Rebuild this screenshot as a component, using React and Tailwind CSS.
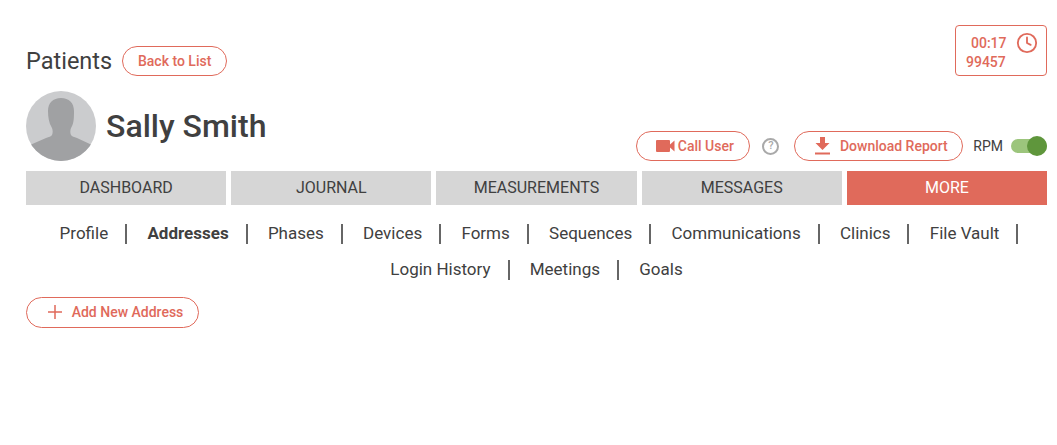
import React from "react";
import { Clock } from "lucide-react";

const tabs = ["DASHBOARD", "JOURNAL", "MEASUREMENTS", "MESSAGES", "MORE"];
const row1 = ["Profile", "Addresses", "Phases", "Devices", "Forms", "Sequences", "Communications", "Clinics", "File Vault"];
const row2 = ["Login History", "Meetings", "Goals"];

function Avatar() {
  return (
    <svg width="70" height="70" viewBox="0 0 70 70" className="shrink-0">
      <defs>
        <clipPath id="avatar-clip">
          <circle cx="35" cy="35" r="35" />
        </clipPath>
      </defs>
      <circle cx="35" cy="35" r="35" fill="#cbccce" />
      <g clipPath="url(#avatar-clip)" fill="#a0a1a3">
        <path d="M35 7c-8 0-13 5-13 13 0 6 1 12 3.500 16 1.500 2.500 1.500 6 .5 8-1 1.500-3 2-6 3L4 54v16h62V54l-15-7c-3-1-5-1.500-6-3-1-2-1-5.500.5-8C48 32 48 26 48 20c0-8-5-13-13-13z" />
      </g>
    </svg>
  );
}

function CameraIcon() {
  return (
    <svg width="19" height="12" viewBox="0 0 19 12" fill="#e06a5b">
      <rect x="0" y="0" width="14" height="12" rx="1" />
      <path d="M14 4.500 18.500 .5v11L14 7.500z" />
    </svg>
  );
}

function DownloadIcon() {
  return (
    <svg width="15" height="18" viewBox="0 0 15 18" fill="#e06a5b">
      <path d="M5 0h5v6h4.500L7.500 13 .5 6H5z" />
      <rect x="0" y="15.500" width="15" height="2" />
    </svg>
  );
}

function PlusIcon() {
  return (
    <svg width="14" height="14" viewBox="0 0 14 14" stroke="#e06a5b" strokeWidth="1.500">
      <path d="M7 0v14M0 7h14" />
    </svg>
  );
}

function LinkRow({ items, separatorLast }) {
  return (
    <div className={separatorLast ? "flex h-9 items-center justify-center pl-[5px]" : "flex h-9 items-center justify-center"}>
      {items.map((item, i) => (
        <React.Fragment key={item}>
          <span className={item === "Addresses" ? "font-bold" : ""}>{item}</span>
          {i < items.length - 1 && <span className="ml-[17px] mr-[20.25px] h-5 w-[2px] bg-[#666666]" />}
          {i === items.length - 1 && separatorLast && <span className="ml-[17px] h-5 w-[2px] bg-[#666666]" />}
        </React.Fragment>
      ))}
    </div>
  );
}

export default function App() {
  return (
    <div className="min-h-[445px] bg-white pl-[26px] pr-[10px] text-[#404040] font-['Roboto',sans-serif]">
      <div className="flex h-[171px] justify-between">
        {/* Patient name */}
        <div className="pt-[46px]">
          <div className="flex h-[30px] items-center">
            <h2 className="pt-[2px] text-[23.5px]">Patients</h2>
            <button className="ml-[10px] h-[30px] w-[105px] rounded-full border border-[#e06a5b] text-sm font-medium text-[#e06a5b]">
              Back to List
            </button>
          </div>
          <div className="mt-[15px] flex items-center">
            <Avatar />
            <h1 className="mb-[1px] ml-[10px] text-[32px] font-medium">Sally Smith</h1>
          </div>
        </div>

        {/* Timer and actions */}
        <div className="flex flex-col items-end pt-[25px]">
          <div className="flex h-[51px] w-[92px] rounded border border-[#e06a5b] pl-[10px] pr-[8px] pt-[7px] text-sm font-medium text-[#e06a5b]">
            <div className="flex-1">
              <div className="pl-[5px] leading-[20px]">00:17</div>
              <div className="leading-[18px]">99457</div>
            </div>
            <Clock size={22} strokeWidth={2} className="-mt-[1px]" />
          </div>
          <div className="mt-[55px] flex items-center">
            <button className="flex h-[30px] w-[114px] items-center justify-center gap-[3px] rounded-full border border-[#e06a5b] pl-[3px] text-sm font-medium text-[#e06a5b]">
              <CameraIcon />
              Call User
            </button>
            <div className="ml-[12px] flex h-[17px] w-[17px] items-center justify-center rounded-full border-2 border-[#a9a9a9] text-[11px] font-medium text-[#a9a9a9]">
              ?
            </div>
            <button className="ml-[15px] flex h-[30px] w-[169px] items-center justify-center gap-[10px] rounded-full border border-[#e06a5b] pl-[5px] text-sm font-medium text-[#e06a5b]">
              <DownloadIcon />
              Download Report
            </button>
            <span className="ml-[10px] text-sm">RPM</span>
            <div className="relative ml-[8px] h-[14px] w-[36px] rounded-full bg-[#9cc57c]">
              <span className="absolute -top-[3px] right-0 h-5 w-5 rounded-full bg-[#5f963c]" />
            </div>
          </div>
        </div>
      </div>

      {/* Tabs */}
      <div className="grid grid-cols-5 gap-[5px]">
        {tabs.map((tab) => (
          <div
            key={tab}
            className={
              tab === "MORE"
                ? "flex h-[34px] items-center justify-center bg-[#e06a5b] text-base text-white"
                : "flex h-[34px] items-center justify-center bg-[#d6d6d6] text-base"
            }
          >
            {tab}
          </div>
        ))}
      </div>

      {/* Sub navigation */}
      <div className="mt-[11px] text-[17px]">
        <LinkRow items={row1} separatorLast />
        <LinkRow items={row2} />
      </div>

      <button className="mt-[9px] flex h-[31px] w-[173px] items-center justify-center gap-[10px] rounded-full border border-[#e06a5b] pb-[1px] pl-[6px] text-sm font-medium text-[#e06a5b]">
        <PlusIcon />
        Add New Address
      </button>
    </div>
  );
}
